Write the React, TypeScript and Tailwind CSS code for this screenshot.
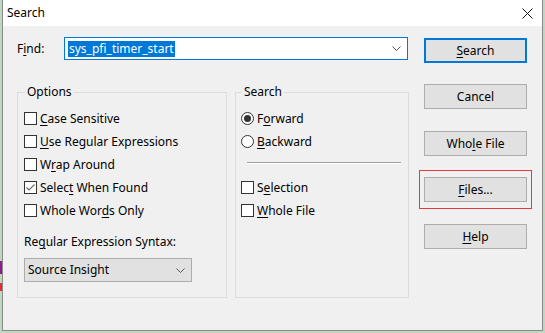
import React from 'react';

const FONT = { fontFamily: '"Noto Sans", "Segoe UI", Arial, sans-serif' };

function U({ children }: { children: React.ReactNode }) {
  return <span className="underline underline-offset-2 decoration-1">{children}</span>;
}

function CheckBox({ checked }: { checked?: boolean }) {
  return (
    <span className="w-[13px] h-[13px] border border-[#333333] bg-white shrink-0 flex items-center justify-center">
      {checked && (
        <svg width="11" height="11" viewBox="0 0 11 11" fill="none">
          <path d="M1.5 5.5 L4 8 L9.5 2.5" stroke="#6b6b6b" strokeWidth="1.1" />
        </svg>
      )}
    </span>
  );
}

function Radio({ checked }: { checked?: boolean }) {
  return (
    <span className="w-[13px] h-[13px] rounded-full border border-[#333333] bg-white shrink-0 flex items-center justify-center">
      {checked && <span className="w-[7px] h-[7px] rounded-full bg-[#333333]" />}
    </span>
  );
}

function Row({ children }: { children: React.ReactNode }) {
  return <div className="h-[23px] flex items-center gap-[3px] text-[12px] text-black">{children}</div>;
}

function Chevron() {
  return (
    <svg width="9" height="5" viewBox="0 0 9 5" fill="none">
      <path d="M0.5 0.5 L4.5 4.5 L8.5 0.5" stroke="#555555" strokeWidth="1" />
    </svg>
  );
}

function Btn({ children, primary }: { children: React.ReactNode; primary?: boolean }) {
  return (
    <div
      className={
        primary
          ? 'w-[103px] h-[25px] bg-[#e1e1e1] border-2 border-[#0078d7] flex items-center justify-center text-[12px] text-black'
          : 'w-[103px] h-[25px] bg-[#e1e1e1] border border-[#adadad] flex items-center justify-center text-[12px] text-black'
      }
    >
      {children}
    </div>
  );
}

export default function App() {
  return (
    <div className="w-[545px] h-[333px] bg-[#bfd6bf] relative overflow-hidden" style={FONT}>
      {/* bits of the window behind */}
      <div className="absolute left-0 top-[261px] w-[2px] h-[13px] bg-[#8b1e8b]" />
      <div className="absolute left-0 top-[283px] w-[2px] h-[8px] bg-[#e03030]" />

      <div className="ml-[2px] w-[541px] h-[331px] border-x border-b border-[#8a8a8a] bg-[#f0f0f0] flex flex-col">
        {/* title bar */}
        <div className="h-[26px] bg-white flex items-center justify-between pl-[4px] pr-[8px]">
          <span className="text-[12px] text-black">Search</span>
          <svg width="11" height="11" viewBox="0 0 11 11" className="mr-[1px]">
            <path d="M0.5 0.5 L10.5 10.5 M10.5 0.5 L0.5 10.5" stroke="#111111" strokeWidth="1" />
          </svg>
        </div>

        <div className="flex flex-1">
          {/* left area */}
          <div className="pl-[14px] w-[406px] flex flex-col">
            <div className="flex items-center mt-[11px] h-[23px]">
              <span className="text-[12px] text-black w-[47px]">
                F<U>i</U>nd:
              </span>
              <div className="w-[344px] h-[23px] bg-white border border-[#0078d7] flex items-center justify-between pl-[3px] pr-[6px]">
                <span className="bg-[#0078d7] text-white text-[12px] leading-[16px] px-[1px]">sys_pfi_timer_start</span>
                <Chevron />
              </div>
            </div>

            <div className="flex gap-[8px] mt-[32px]">
              {/* Options group */}
              <div className="relative w-[210px] h-[206px] border border-[#dcdcdc] pl-[6px] pt-[14px]">
                <span className="absolute left-[7px] top-[-9px] bg-[#f0f0f0] px-[2px] text-[12px] leading-[16px] text-black">
                  Options
                </span>
                <Row>
                  <CheckBox />
                  <span>
                    <U>C</U>ase Sensitive
                  </span>
                </Row>
                <Row>
                  <CheckBox />
                  <span>
                    <U>U</U>se Regular Expressions
                  </span>
                </Row>
                <Row>
                  <CheckBox />
                  <span>
                    W<U>r</U>ap Around
                  </span>
                </Row>
                <Row>
                  <CheckBox checked />
                  <span>
                    Selec<U>t</U> When Found
                  </span>
                </Row>
                <Row>
                  <CheckBox />
                  <span>
                    Whole Wor<U>d</U>s Only
                  </span>
                </Row>
                <div className="mt-[12px] text-[12px] leading-[16px] text-black">
                  Re<U>g</U>ular Expression Syntax:
                </div>
                <div className="mt-[8px] w-[168px] h-[24px] bg-[#e1e1e1] border border-[#adadad] flex items-center justify-between pl-[3px] pr-[6px] text-[12px] text-black">
                  <span>Source Insight</span>
                  <Chevron />
                </div>
              </div>

              {/* Search group */}
              <div className="relative w-[174px] h-[206px] border border-[#dcdcdc] pl-[5px] pt-[14px]">
                <span className="absolute left-[6px] top-[-9px] bg-[#f0f0f0] px-[2px] text-[12px] leading-[16px] text-black">
                  Search
                </span>
                <Row>
                  <Radio checked />
                  <span>
                    F<U>o</U>rward
                  </span>
                </Row>
                <Row>
                  <Radio />
                  <span>
                    <U>B</U>ackward
                  </span>
                </Row>
                <div className="ml-[6px] mt-[9px] w-[154px] border-t border-[#a0a0a0] border-b border-b-white" />
                <div className="mt-[12px]">
                  <Row>
                    <CheckBox />
                    <span>
                      S<U>e</U>lection
                    </span>
                  </Row>
                  <Row>
                    <CheckBox />
                    <span>
                      <U>W</U>hole File
                    </span>
                  </Row>
                </div>
              </div>
            </div>
          </div>

          {/* buttons */}
          <div className="ml-[15px] flex flex-col items-start">
            <div className="mt-[12px]">
              <Btn primary>
                <U>S</U>earch
              </Btn>
            </div>
            <div className="mt-[21px]">
              <Btn>Cancel</Btn>
            </div>
            <div className="mt-[22px]">
              <Btn>
                Who<U>l</U>e File
              </Btn>
            </div>
            <div className="mt-[14px] ml-[-5px] border border-[#e8383d] pt-[6px] pb-[6px] px-[4px]">
              <Btn>
                <U>F</U>iles...
              </Btn>
            </div>
            <div className="mt-[15px]">
              <Btn>
                <U>H</U>elp
              </Btn>
            </div>
          </div>
        </div>
      </div>
    </div>
  );
}
